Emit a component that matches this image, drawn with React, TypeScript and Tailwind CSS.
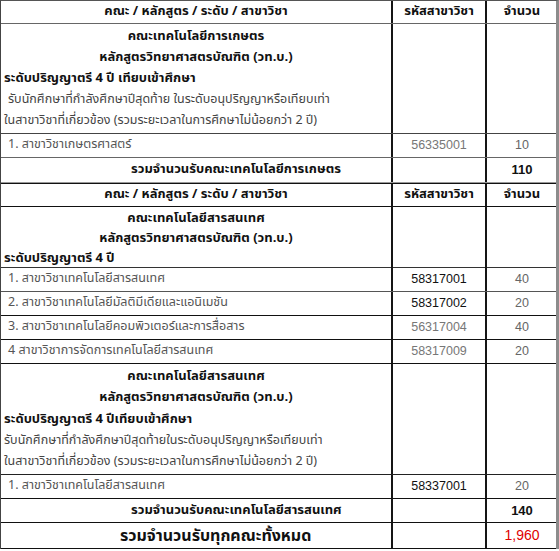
import React from "react";

const G = "grid grid-cols-[392px_94px_70px]";
const C1 = "border-r-2 border-r-[#151515]";
const C2 = "border-r-2 border-r-[#151515]";

function Header({ line = "border-b-[#111]" }: { line?: string }) {
  return (
    <div className={`${G} h-[23px] border-b ${line} font-bold text-[13px] text-[#111]`}>
      <div className={`${C1} flex items-center justify-center`}>คณะ / หลักสูตร / ระดับ / สาขาวิชา</div>
      <div className={`${C2} flex items-center justify-center`}>รหัสสาขาวิชา</div>
      <div className="flex items-center justify-center">จำนวน</div>
    </div>
  );
}

function Block({ lines, h, line = "border-b-[#333]" }: { lines: React.ReactNode[]; h: string; line?: string }) {
  return (
    <div className={`${G} ${h} border-b ${line}`}>
      <div className={`${C1} flex flex-col justify-around py-[1px]`}>{lines}</div>
      <div className={C2}></div>
      <div></div>
    </div>
  );
}

function Item({ name, code, n, dark, line = "border-b-[#111]" }: { name: string; code: string; n: string; dark?: boolean; line?: string }) {
  return (
    <div className={`${G} h-[24px] border-b ${line} text-[12.5px]`}>
      <div className={`${C1} flex items-center pl-[7px] text-[#555]`}>{name}</div>
      <div className={`${C2} flex items-center justify-center font-['Liberation_Sans',Arial,sans-serif] text-[12.5px] ${dark ? "text-[#111]" : "text-[#777]"}`}>{code}</div>
      <div className="flex items-center justify-center font-['Liberation_Sans',Arial,sans-serif] text-[12.5px] text-[#666]">{n}</div>
    </div>
  );
}

function Total({ label, n, h = "h-[25px]", big, line = "border-b-[#111]" }: { label: string; n: string; h?: string; big?: boolean; line?: string }) {
  return (
    <div className={`${G} ${h} border-b ${line}`}>
      <div className={`${C1} flex items-center ${big ? "pl-[119px] text-[16px]" : "pl-[130px] text-[13px]"} font-bold text-[#111]`}>{label}</div>
      <div className={C2}></div>
      <div className={`flex items-center justify-center font-['Liberation_Sans',Arial,sans-serif] ${big ? "text-[14px] text-[#e00000]" : "font-bold text-[13px] text-[#111]"}`}>{n}</div>
    </div>
  );
}

const centerB = "text-center font-bold text-[13px] text-[#111] leading-[20px]";
const leftB = "pl-[3px] font-bold text-[13px] text-[#111] leading-[20px]";
const body = "text-[12.5px] text-[#444] leading-[20px] whitespace-nowrap";

export default function App() {
  return (
    <div className="w-[559px] h-[551px] bg-white font-['Tahoma','Noto_Sans_Thai','Loma','Garuda',sans-serif]">
      <div className="w-[559px] border-l border-l-[#444] border-r-[3px] border-r-[#8c8c8c] border-t border-t-[#555]">
        <Header line="border-b-[#666]" />
        <Block
          h="h-[110px]"
          line="border-b-[#444]"
          lines={[
            <div key="a" className={centerB}>คณะเทคโนโลยีการเกษตร</div>,
            <div key="b" className={centerB}>หลักสูตรวิทยาศาสตรบัณฑิต (วท.บ.)</div>,
            <div key="c" className={leftB}>ระดับปริญญาตรี 4 ปี เทียบเข้าศึกษา</div>,
            <div key="d" className={`${body} pl-[7px]`}>รับนักศึกษาที่กำลังศึกษาปีสุดท้าย ในระดับอนุปริญญาหรือเทียบเท่า</div>,
            <div key="e" className={`${body} pl-[3px]`}>ในสาขาวิชาที่เกี่ยวข้อง (รวมระยะเวลาในการศึกษาไม่น้อยกว่า 2 ปี)</div>,
          ]}
        />
        <Item name="1. สาขาวิชาเกษตรศาสตร์" code="56335001" n="10" line="border-b-[#666]" />
        <Total label="รวมจำนวนรับคณะเทคโนโลยีการเกษตร" n="110" line="border-b-[#999]" />
        <div className="border-t border-t-[#111]">
          <Header line="border-b-[#111]" />
        </div>
        <Block
          h="h-[61px]"
          lines={[
            <div key="a" className={centerB}>คณะเทคโนโลยีสารสนเทศ</div>,
            <div key="b" className={centerB}>หลักสูตรวิทยาศาสตรบัณฑิต (วท.บ.)</div>,
            <div key="c" className={leftB}>ระดับปริญญาตรี 4 ปี</div>,
          ]}
        />
        <Item name="1. สาขาวิชาเทคโนโลยีสารสนเทศ" code="58317001" n="40" dark line="border-b-[#555]" />
        <Item name="2. สาขาวิชาเทคโนโลยีมัลติมีเดียและแอนิเมชัน" code="58317002" n="20" dark />
        <Item name="3. สาขาวิชาเทคโนโลยีคอมพิวเตอร์และการสื่อสาร" code="56317004" n="40" />
        <Item name="4 สาขาวิชาการจัดการเทคโนโลยีสารสนเทศ" code="58317009" n="20" />
        <Block
          h="h-[111px]"
          line="border-b-[#222]"
          lines={[
            <div key="a" className={centerB}>คณะเทคโนโลยีสารสนเทศ</div>,
            <div key="b" className={centerB}>หลักสูตรวิทยาศาสตรบัณฑิต (วท.บ.)</div>,
            <div key="c" className={leftB}>ระดับปริญญาตรี 4 ปีเทียบเข้าศึกษา</div>,
            <div key="d" className={`${body} pl-[3px]`}>รับนักศึกษาที่กำลังศึกษาปีสุดท้ายในระดับอนุปริญญาหรือเทียบเท่า</div>,
            <div key="e" className={`${body} pl-[3px]`}>ในสาขาวิชาที่เกี่ยวข้อง (รวมระยะเวลาในการศึกษาไม่น้อยกว่า 2 ปี)</div>,
          ]}
        />
        <Item name="1. สาขาวิชาเทคโนโลยีสารสนเทศ" code="58337001" n="20" dark />
        <Total label="รวมจำนวนรับคณะเทคโนโลยีสารสนเทศ" n="140" h="h-[24px]" />
        <Total label="รวมจำนวนรับทุกคณะทั้งหมด" n="1,960" h="h-[26px]" big />
      </div>
    </div>
  );
}
